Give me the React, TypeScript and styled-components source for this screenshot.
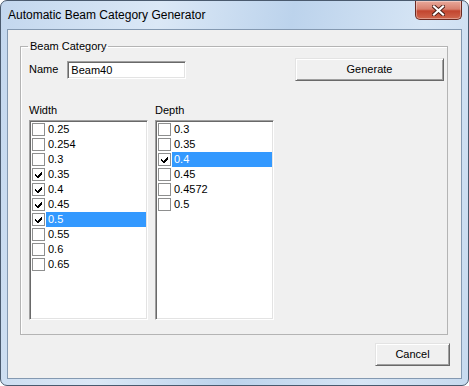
import React from 'react';
import styled, { createGlobalStyle } from 'styled-components';

const GlobalStyle = createGlobalStyle`
  html, body {
    margin: 0;
    padding: 0;
    background: #ffffff;
  }
  body {
    font-family: "Liberation Sans", Arial, sans-serif;
    font-size: 11px;
    color: #000000;
  }
`;

const Window = styled.div`
  width: 469px;
  height: 386px;
  box-sizing: border-box;
  border: 1px solid #4a5a6e;
  border-radius: 7px;
  background: linear-gradient(100deg, #c3d7ee 0%, #dbe8f6 30%, #bcd3ec 55%, #d6e5f5 80%, #c7daef 100%);
  padding: 0 6px 6px 6px;
  display: flex;
  flex-direction: column;
`;

const TitleBar = styled.div`
  height: 28px;
  display: flex;
  align-items: flex-start;
`;

const Title = styled.div`
  font-size: 12px;
  line-height: 14px;
  margin-top: 7px;
  padding-left: 1px;
  color: #000000;
`;

const CloseButton = styled.div`
  margin-left: auto;
  width: 47px;
  height: 19px;
  box-sizing: border-box;
  border: 1px solid #6b2a22;
  border-top: none;
  border-radius: 0 0 5px 5px;
  background: linear-gradient(180deg, #e9a99b 0%, #d8806e 45%, #c2452f 55%, #d0674e 100%);
  box-shadow: inset 0 0 0 1px rgba(255, 255, 255, 0.35);
  display: flex;
  align-items: center;
  justify-content: center;
`;

const Client = styled.div`
  flex: 1;
  border: 1px solid #8499b1;
  background: #f0f0f0;
  display: flex;
  flex-direction: column;
`;

const Group = styled.fieldset`
  margin: 10px 13px 0 12px;
  padding: 5px 3px 14px 8px;
  border: 1px solid #b4b4b4;
  box-shadow: inset 1px 1px 0 #ffffff;
  flex: 1;
  display: flex;
  flex-direction: column;
  min-width: 0;
`;

const Legend = styled.legend`
  padding: 0 2px;
  margin-left: -1px;
  line-height: 13px;
`;

const NameRow = styled.div`
  display: flex;
  align-items: center;
  height: 23px;
`;

const Label = styled.span`
  line-height: 13px;
`;

const TextBox = styled.div`
  margin-left: 9px;
  width: 119px;
  height: 18px;
  box-sizing: border-box;
  border-top: 1px solid #a0a0a0;
  border-left: 1px solid #a0a0a0;
  border-right: 1px solid #ffffff;
  border-bottom: 1px solid #ffffff;
  box-shadow: inset 1px 1px 0 #696969, inset -1px -1px 0 #e3e3e3;
  background: #ffffff;
  padding: 2px 3px;
  line-height: 13px;
`;

const Button = styled.div<{ $width: number }>`
  width: ${(p) => p.$width}px;
  height: 23px;
  box-sizing: border-box;
  border-top: 1px solid #e3e3e3;
  border-left: 1px solid #e3e3e3;
  border-right: 1px solid #696969;
  border-bottom: 1px solid #696969;
  box-shadow: inset 1px 1px 0 #ffffff, inset -1px -1px 0 #a0a0a0;
  background: #f0f0f0;
  display: flex;
  align-items: center;
  justify-content: center;
  line-height: 13px;
`;

const GenerateButton = styled(Button)`
  margin-left: auto;
`;

const Lists = styled.div`
  display: flex;
  gap: 7px;
  margin-top: 23px;
  flex: 1;
`;

const ListColumn = styled.div`
  display: flex;
  flex-direction: column;
  width: 119px;
`;

const ListBox = styled.div`
  margin-top: 3px;
  flex: 1;
  box-sizing: border-box;
  border-top: 1px solid #a0a0a0;
  border-left: 1px solid #a0a0a0;
  border-right: 1px solid #ffffff;
  border-bottom: 1px solid #ffffff;
  box-shadow: inset 1px 1px 0 #696969, inset -1px -1px 0 #e3e3e3;
  background: #ffffff;
  padding: 1px 1px 1px 2px;
  display: flex;
  flex-direction: column;
`;

const Item = styled.div`
  height: 15px;
  display: flex;
  align-items: center;
`;

const ItemText = styled.span<{ $selected: boolean }>`
  flex: 1;
  height: 15px;
  margin-left: 1px;
  padding-left: 2px;
  line-height: 15px;
  background: ${(p) => (p.$selected ? '#3399ff' : 'transparent')};
  color: ${(p) => (p.$selected ? '#ffffff' : '#000000')};
`;

const Footer = styled.div`
  display: flex;
  justify-content: flex-end;
  padding: 8px 11px 12px 0;
`;

function Check({ checked }: { checked: boolean }) {
  return (
    <svg width="13" height="13" viewBox="0 0 13 13">
      <rect x="0.5" y="0.5" width="12" height="12" fill="#ffffff" stroke="#8e8f8f" />
      {checked && (
        <path
          d="M3 6h1v1h1v1h1V7h1V6h1V5h1V4h1v3H9v1H8v1H7v1H5V9H4V8H3z"
          fill="#000000"
        />
      )}
    </svg>
  );
}

function CloseGlyph() {
  return (
    <svg width="13" height="11" viewBox="0 0 13 11">
      <path
        d="M2 1.5L11 9.5M11 1.5L2 9.5"
        stroke="#4a1d16"
        strokeWidth="4"
        strokeLinecap="square"
      />
      <path
        d="M2 1.5L11 9.5M11 1.5L2 9.5"
        stroke="#ffffff"
        strokeWidth="2.2"
        strokeLinecap="square"
      />
    </svg>
  );
}

type Entry = { value: string; checked: boolean; selected?: boolean };

const widths: Entry[] = [
  { value: '0.25', checked: false },
  { value: '0.254', checked: false },
  { value: '0.3', checked: false },
  { value: '0.35', checked: true },
  { value: '0.4', checked: true },
  { value: '0.45', checked: true },
  { value: '0.5', checked: true, selected: true },
  { value: '0.55', checked: false },
  { value: '0.6', checked: false },
  { value: '0.65', checked: false },
];

const depths: Entry[] = [
  { value: '0.3', checked: false },
  { value: '0.35', checked: false },
  { value: '0.4', checked: true, selected: true },
  { value: '0.45', checked: false },
  { value: '0.4572', checked: false },
  { value: '0.5', checked: false },
];

function CheckedList({ label, items }: { label: string; items: Entry[] }) {
  return (
    <ListColumn>
      <Label>{label}</Label>
      <ListBox>
        {items.map((it) => (
          <Item key={it.value}>
            <Check checked={it.checked} />
            <ItemText $selected={!!it.selected}>{it.value}</ItemText>
          </Item>
        ))}
      </ListBox>
    </ListColumn>
  );
}

export default function App() {
  return (
    <>
      <GlobalStyle />
      <Window>
        <TitleBar>
          <Title>Automatic Beam Category Generator</Title>
          <CloseButton>
            <CloseGlyph />
          </CloseButton>
        </TitleBar>
        <Client>
          <Group>
            <Legend>Beam Category</Legend>
            <NameRow>
              <Label>Name</Label>
              <TextBox>Beam40</TextBox>
              <GenerateButton $width={149}>Generate</GenerateButton>
            </NameRow>
            <Lists>
              <CheckedList label="Width" items={widths} />
              <CheckedList label="Depth" items={depths} />
            </Lists>
          </Group>
          <Footer>
            <Button $width={75}>Cancel</Button>
          </Footer>
        </Client>
      </Window>
    </>
  );
}
